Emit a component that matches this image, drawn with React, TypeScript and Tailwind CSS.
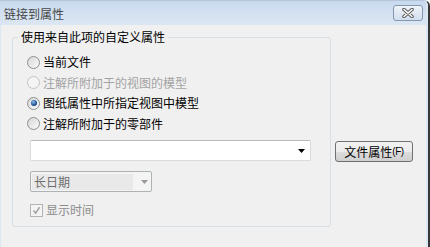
import React from 'react';

// 单选按钮 (Win7 风格)
function Radio({ checked = false, disabled = false }: { checked?: boolean; disabled?: boolean }) {
  return (
    <span
      className={`flex h-[13px] w-[13px] shrink-0 items-center justify-center rounded-full border ${
        disabled
          ? 'border-[#c4c4c4] bg-[#f4f4f4]'
          : 'border-[#8e8f8f] bg-gradient-to-br from-[#d6d6d6] to-[#fbfbfb]'
      }`}
    >
      {checked && (
        <span className="h-[6px] w-[6px] rounded-full bg-[radial-gradient(circle_at_40%_35%,#8cc0ee,#1a4d8f_60%,#0c2550)]" />
      )}
    </span>
  );
}

type Option = { label: string; checked?: boolean; disabled?: boolean };

const options: Option[] = [
  { label: '当前文件' },
  { label: '注解所附加于的视图的模型', disabled: true },
  { label: '图纸属性中所指定视图中模型', checked: true },
  { label: '注解所附加于的零部件' },
];

export default function App() {
  return (
    <div className="flex h-[247px] w-[430px] overflow-hidden rounded-tr-[6px] border-t border-r-2 border-t-[#b6c6da] border-r-[#363636] bg-[#f0f0f0] font-['Noto_Sans_CJK_SC',sans-serif] text-[12px] leading-[16px] text-[#1a1a1a]">
      <div className="flex min-w-0 flex-1 flex-col">
        {/* 标题栏 */}
        <div className="flex h-[24px] shrink-0 items-start justify-between bg-gradient-to-b from-[#c9daee] to-[#dce7f4] pl-[4px] pr-[3px]">
          <span className="mt-[5px] text-[#464646]">链接到属性</span>
          <button
            className="mt-[4px] flex h-[16px] w-[30px] items-center justify-center rounded-[3px] border border-[#8396ad] bg-gradient-to-b from-[#eef3fa] to-[#d3dfee]"
            aria-label="Close"
          >
            <svg width="14" height="10" viewBox="0 0 14 10">
              <path d="M3 1.5 L11 8.5 M11 1.5 L3 8.5" stroke="#5b5b5b" strokeWidth="3.6" strokeLinecap="round" />
              <path d="M3 1.5 L11 8.5 M11 1.5 L3 8.5" stroke="#ffffff" strokeWidth="1.6" strokeLinecap="round" />
            </svg>
          </button>
        </div>

        {/* 内容 */}
        <div className="flex flex-1 border-l border-[#dce7f4]">
          <div className="flex items-start pl-[11px] pt-[12px]">
            {/* 分组框 */}
            <div className="relative h-[190px] w-[319px] rounded-[3px] border border-[#d5dfe5]">
              <span className="absolute left-[5px] top-[-9px] bg-[#f0f0f0] px-[3px] text-black">
                使用来自此项的自定义属性
              </span>

              <div className="flex flex-col pl-[14px] pt-[14px]">
                {options.map((o) => (
                  <div key={o.label} className="flex h-[20.5px] items-center gap-[3px]">
                    <Radio checked={o.checked} disabled={o.disabled} />
                    <span className={o.disabled ? 'text-[#a3a3a3]' : 'text-black'}>{o.label}</span>
                  </div>
                ))}
              </div>

              <div className="flex flex-col items-start pl-[17px]">
                {/* 组合框 */}
                <div className="mt-[6px] flex h-[21px] w-[281px] items-center justify-end rounded-[2px] border border-[#d9dbe0] border-t-[#b7b9bf] bg-white pr-[5px]">
                  <svg width="7" height="4" viewBox="0 0 7 4">
                    <polygon points="0,0 7,0 3.5,4" fill="#000" />
                  </svg>
                </div>

                {/* 长日期 (禁用) */}
                <div className="mt-[10px] flex h-[21px] w-[122px] items-center rounded-[2px] border border-[#adb2b5] bg-[#f4f4f4] pl-[1px]">
                  <span className="flex h-[16px] w-[101px] items-center bg-[#e9e9e9] pl-[2px] text-[#6d6d6d]">长日期</span>
                  <svg className="ml-[8px]" width="7" height="4" viewBox="0 0 7 4">
                    <polygon points="0,0 7,0 3.5,4" fill="#9a9a9a" />
                  </svg>
                </div>

                {/* 显示时间 */}
                <div className="mt-[8px] flex h-[20px] items-center gap-[3px]">
                  <span className="flex h-[13px] w-[13px] items-center justify-center border border-[#b4b4b4] bg-[#f4f4f4]">
                    <svg width="9" height="9" viewBox="0 0 9 9">
                      <path d="M1.5 4.5 L3.6 7.2 L7.6 1.2" stroke="#a6a6a6" strokeWidth="1.6" fill="none" />
                    </svg>
                  </span>
                  <span className="text-[#8c8c8c]">显示时间</span>
                </div>
              </div>
            </div>

            <button className="ml-[4px] mt-[104px] flex h-[21px] w-[78px] items-center justify-center rounded-[3px] border border-[#707070] bg-[linear-gradient(#f2f2f2,#ebebeb_50%,#dddddd_51%,#cfcfcf)] text-black">
              文件属性
              <span className="font-['Liberation_Sans',sans-serif] text-[10px] tracking-[-0.5px]">(F)</span>
            </button>
          </div>
        </div>
      </div>
      <div className="w-[2px] shrink-0 bg-[#dbe6f3]" />
    </div>
  );
}
